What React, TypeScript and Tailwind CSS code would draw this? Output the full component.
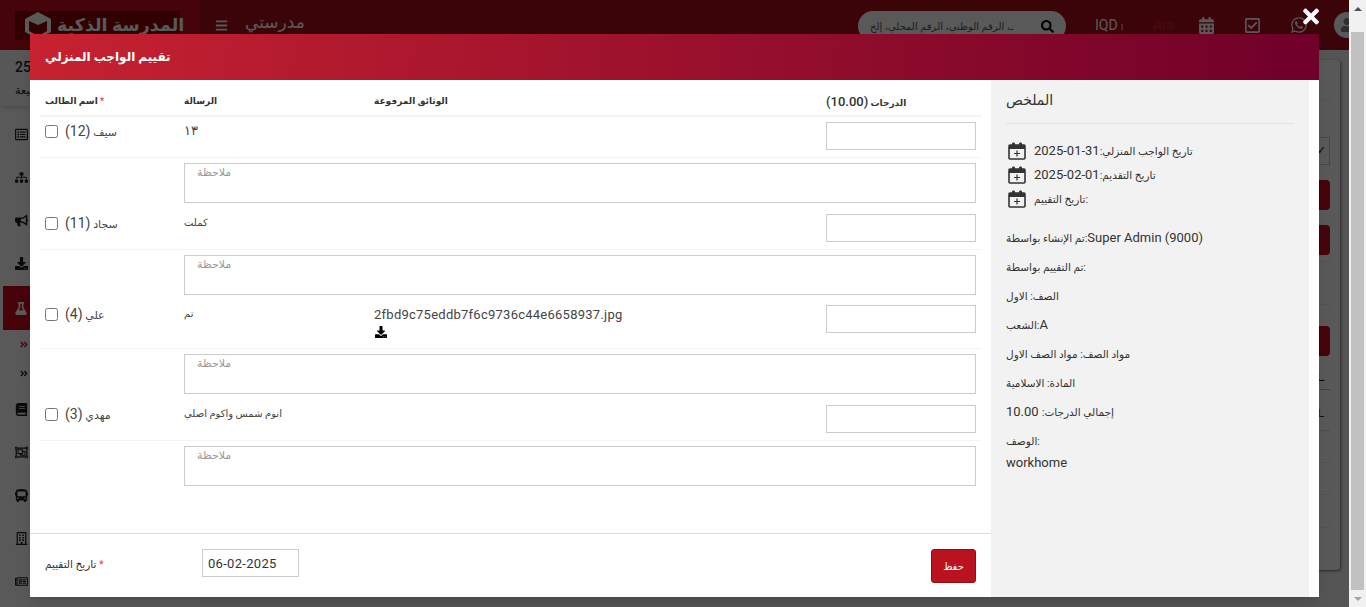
import { FaAngleDoubleRight, FaBook, FaBullhorn, FaBus, FaCalendarAlt, FaDownload, FaFlask, FaRegBuilding, FaRegCheckSquare, FaRegListAlt, FaRegNewspaper, FaRegObjectGroup, FaSearch, FaSitemap, FaTimes, FaUser, FaWhatsapp, FaBars } from 'react-icons/fa';

const font = "font-['Roboto','DejaVu_Sans',sans-serif]";

const students = [
    { name: 'سيف', id: 12, msg: '١٣', msgSize: 'text-[13px]', rowH: 'h-[41px]', noteH: 'h-[51px]' },
    { name: 'سجاد', id: 11, msg: 'كملت', msgSize: 'text-[10px]', rowH: 'h-[41px]', noteH: 'h-[50px]' },
    { name: 'علي', id: 4, msg: 'تم', msgSize: 'text-[10px]', file: '2fbd9c75eddb7f6c9736c44e6658937.jpg', rowH: 'h-[49px]', noteH: 'h-[51px]' },
    { name: 'مهدي', id: 3, msg: 'انوم شمس واكوم اصلي', msgSize: 'text-[10px]', rowH: 'h-[41px]', noteH: 'h-[51px]' },
];

const dateRows = [
    { label: 'تاريخ الواجب المنزلي:', value: '31-01-2025' },
    { label: 'تاريخ التقديم:', value: '01-02-2025' },
    { label: 'تاريخ التقييم:' },
];

const summaryRows = [
    { label: 'تم الإنشاء بواسطة:', value: 'Super Admin (9000)' },
    { label: 'تم التقييم بواسطة:' },
    { label: 'الصف: الاول' },
    { label: 'الشعب:', value: 'A' },
    { label: 'مواد الصف: مواد الصف الاول' },
    { label: 'المادة: الاسلامية' },
    { label: 'إجمالي الدرجات:', value: ' 10.00' },
];

const navTop = [FaRegListAlt, FaSitemap, FaBullhorn, FaDownload];
const navBottom = [FaBook, FaRegObjectGroup, FaBus, FaRegBuilding, FaRegNewspaper];

function CalendarPlus() {
    return (
        <svg width="18" height="18" viewBox="0 0 18 18" className="shrink-0 text-[#333]">
            <rect x="1" y="3" width="16" height="14" rx="1" fill="none" stroke="currentColor" strokeWidth="1.6" />
            <rect x="1" y="3" width="16" height="4" fill="currentColor" />
            <rect x="4" y="0.5" width="3" height="4.5" rx="1.2" fill="currentColor" />
            <rect x="11" y="0.5" width="3" height="4.5" rx="1.2" fill="currentColor" />
            <path d="M9 8.5v6M6 11.5h6" stroke="currentColor" strokeWidth="1.2" />
        </svg>
    );
}

function Header() {
    return (
        <header className="h-[50px] flex items-center bg-[#a60e1c] text-white shrink-0">
            <div className="w-[200px] shrink-0 h-full bg-[#c5091d] flex items-center pl-[15px]">
                <div className="w-[165px] h-[29px] bg-[#8c0000] flex items-center gap-[5px] pl-[9px]">
                    <svg width="28" height="28" viewBox="0 0 28 28" className="text-white shrink-0">
                        <path d="M14 1L27 8v13l-13 7L1 21V8z" fill="currentColor" />
                        <path d="M5 10l9 4 9-4v10l-9 5-9-5z" fill="#8c0000" />
                    </svg>
                    <span dir="rtl" className="text-[17.5px] font-bold tracking-wide whitespace-nowrap">المدرسة الذكية</span>
                </div>
            </div>
            <FaBars className="ml-[15px] w-[13px] h-[13px] shrink-0" />
            <span dir="rtl" className="ml-[17px] w-[60px] shrink-0 text-left text-[17px] -mt-[4px] whitespace-nowrap">مدرستي</span>
            <div className="ml-[553px] mt-[2px] w-[208px] h-[30px] shrink-0 rounded-full bg-white flex items-center justify-between px-[12px] text-[#333] overflow-hidden">
                <span dir="rtl" className="text-[10px] whitespace-nowrap text-[#555]">ـ، الرقم الوطني، الرقم المحلي، إلخ</span>
                <FaSearch className="w-[13px] h-[13px] text-black shrink-0" />
            </div>
            <span className="ml-[29px] text-[14px] w-[58px] shrink-0">IQD ၊</span>
            <span className="text-[14px] text-[#d01a2c] w-[46px] shrink-0">Ara</span>
            <FaCalendarAlt className="w-[15px] h-[17px] mr-[30px] shrink-0" />
            <FaRegCheckSquare className="w-[17px] h-[17px] mr-[29px] shrink-0" />
            <FaWhatsapp className="w-[18px] h-[18px] mr-[26px] shrink-0" />
            <div className="w-[26px] h-[26px] rounded-full bg-white flex items-center justify-center shrink-0">
                <FaUser className="w-[14px] h-[14px] text-[#888]" />
            </div>
        </header>
    );
}

function Sidebar() {
    return (
        <aside className="w-[200px] shrink-0 bg-white text-[#222] flex flex-col">
            <div className="h-[56px] bg-[#fafafa] pl-[15px] pt-[9px] shadow-md">
                <p className="text-[14px] font-medium leading-[17px]">25</p>
                <p className="mt-[8px] text-[11px] leading-[14px]">ربيعة</p>
            </div>
            <nav className="pt-[7px]">
                {navTop.map((Icon, i) => (
                    <div key={i} className="h-[43px] pl-[15px] flex items-center"><Icon className="w-[13px] h-[13px]" /></div>
                ))}
                <div className="ml-[3px] h-[44px] mt-px pl-[12px] bg-[#cc0a1c] text-white flex items-center"><FaFlask className="w-[12px] h-[13px]" /></div>
                <div className="h-[29px] pl-[20px] flex items-center text-[#b5121f]"><FaAngleDoubleRight className="w-[8px] h-[9px]" /></div>
                <div className="h-[29px] pl-[20px] flex items-center"><FaAngleDoubleRight className="w-[8px] h-[9px]" /></div>
                {navBottom.map((Icon, i) => (
                    <div key={i} className="h-[43px] pl-[15px] flex items-center"><Icon className="w-[13px] h-[13px]" /></div>
                ))}
            </nav>
        </aside>
    );
}

function BackgroundCard() {
    return (
        <main className="flex-1 pt-[10px] pr-[9px] pl-[20px] min-w-0">
            <div className="h-[510px] rounded-[4px] bg-white shadow-[1px_1px_3px_rgba(0,0,0,0.5)] flex flex-col items-end pr-[10px]">
                <div className="h-[41px] w-full border-b border-[#eee] shrink-0" />
                <div className="mt-[36px] w-[120px] h-[28px] border border-[#ccc] flex items-center justify-end pr-[3px] text-[11px] shrink-0">✓</div>
                <div className="mt-[15px] w-[120px] h-[30px] rounded-[4px] bg-[#c8101e] shrink-0" />
                <div className="mt-[15px] w-[120px] h-[30px] rounded-[4px] bg-[#c8101e] shrink-0" />
                <div className="mt-[6px] w-full border-b border-[#eee] shrink-0" />
                <div className="mt-[42px] w-full border-b border-[#eee] shrink-0" />
                <div className="mt-[21px] w-[120px] h-[30px] rounded-[4px] bg-[#c8101e] shrink-0" />
                <div className="mt-[14px] w-full h-[20px] border-b border-[#bbb] text-right text-[12px] leading-[14px] text-[#123] shrink-0 pr-[6px]">ـا</div>
                <div className="w-full h-[41px] border-b border-[#ddd] text-right text-[11px] text-[#246] pt-[16px] pr-[6px] shrink-0">ـا</div>
                <div className="mt-[31px] w-full border-b border-[#eee] shrink-0" />
                <div className="mt-[31px] w-full border-b border-[#eee] shrink-0" />
                <div className="mt-[32px] w-full border-b border-[#eee] shrink-0" />
            </div>
        </main>
    );
}

function EvaluationTable() {
    return (
        <div className="mx-[10px] text-[#444]">
            <div className="grid grid-cols-[139px_190px_452px_160px] h-[37px] pt-[8px] border-b-2 border-[#f4f4f4] font-bold text-[9px] items-center text-[#333]">
                <div className="pl-[5px]">اسم الطالب <span className="text-[#e8344a]">*</span></div>
                <div className="pl-[5px]">الرسالة</div>
                <div className="pl-[5px]">الوثائق المرفوعة</div>
                <div className="pl-[5px]"><span dir="rtl" className="inline-block">الدرجات <span className="text-[13px] font-medium">(10.00)</span></span></div>
            </div>
            {students.map(s => (
                <div key={s.id}>
                    <div className={`grid grid-cols-[139px_190px_452px_160px] border-b border-[#f4f4f4] pt-[5px] ${s.rowH}`}>
                        <div className="pl-[5px] flex items-start gap-[7px]">
                            <input type="checkbox" className="mt-[3px] w-[13px] h-[13px] m-0" />
                            <span dir="rtl" className="text-[11px] leading-[18px]">{s.name} <span className="text-[14px]">({s.id})</span></span>
                        </div>
                        <div className={`pl-[5px] leading-[18px] ${s.msgSize}`}>{s.msg}</div>
                        <div className="pl-[5px] pt-px text-[13px] leading-[18px] tracking-[0.25px]">
                            {s.file}
                            {s.file && <FaDownload className="w-[12px] h-[12px] mt-[2px] ml-px text-black" />}
                        </div>
                        <div className="px-[5px]"><input className="w-full h-[28px] border border-[#ccc] bg-white" /></div>
                    </div>
                    <div className={`grid grid-cols-[139px_1fr] border-b border-[#f4f4f4] pt-[5px] last:border-0 ${s.noteH}`}>
                        <div />
                        <div className="pl-[5px] pr-[5px]">
                            <textarea rows={2} placeholder="ملاحظة" className="block w-full h-[40px] resize-none border border-[#ccc] bg-white pl-[12px] pt-[2px] text-[11px] leading-[14px] placeholder:text-[#999]" />
                        </div>
                    </div>
                </div>
            ))}
        </div>
    );
}

function Summary() {
    return (
        <aside className="w-[318px] shrink-0 bg-[#f2f2f2] px-[15px] text-[#333]">
            <h3 dir="rtl" className="h-[44px] border-b border-[#e1e1e1] text-left text-[14px] leading-[40px]">الملخص</h3>
            <div className="mt-[18px] flex flex-col gap-[6px] pl-[2px]">
                {dateRows.map(d => (
                    <div key={d.label} className="h-[18px] flex items-center gap-[8px]">
                        <CalendarPlus />
                        <span className="text-[10.5px] leading-[18px]">{d.label}<span className="text-[13px]">{d.value}</span></span>
                    </div>
                ))}
            </div>
            <div className="mt-[21px]">
                {summaryRows.map(r => (
                    <div key={r.label} className="h-[29px] leading-[18px] text-[10.5px] whitespace-pre">
                        {r.label}<span className="text-[13px]">{r.value}</span>
                    </div>
                ))}
                <div className="mt-px text-[10.5px] leading-[18px]">الوصف:</div>
                <div className="mt-[3px] text-[13px] leading-[18px]">workhome</div>
            </div>
        </aside>
    );
}

function Modal() {
    return (
        <div className="absolute left-[30px] top-[34px] w-[1289px] h-[563px] bg-white flex flex-col shadow-lg">
            <div className="h-[46px] shrink-0 bg-[linear-gradient(95deg,#c72230,#6f0029)] flex items-center pl-[15px] text-white">
                <h2 className="text-[12px] font-bold">تقييم الواجب المنزلي</h2>
            </div>
            <div className="flex-1 flex pr-[10px] min-h-0">
                <div className="flex-1 flex flex-col min-w-0">
                    <div className="h-[454px] shrink-0 overflow-hidden border-b border-[#ddd]">
                        <EvaluationTable />
                    </div>
                    <div className="flex items-start justify-between pt-[15px] pl-[15px] pr-[15px]">
                        <div className="flex items-center h-[28px] text-[#333]">
                            <span className="w-[157px] pt-[3px] text-[10.5px]">تاريخ التقييم <span className="text-[#e8344a]">*</span></span>
                            <input defaultValue="06-02-2025" className="w-[97px] h-[28px] border border-[#ccc] px-[5px] text-[13px] tracking-[0.3px]" />
                        </div>
                        <button className="w-[45px] h-[34px] rounded-[3px] border border-[#8e0f19] bg-[#bb1220] text-white text-[10px]">حفظ</button>
                    </div>
                </div>
                <Summary />
            </div>
        </div>
    );
}

function Scrollbar() {
    return (
        <div className="w-[17px] h-full shrink-0 bg-[#f1f1f1] flex flex-col items-center">
            <div className="h-[32px] flex items-center justify-center pb-[14px]">
                <div className="w-0 h-0 border-x-[4px] border-x-transparent border-b-[4px] border-b-[#505050]" />
            </div>
            <div className="w-[13px] h-[558px] bg-[#c1c1c1]" />
            <div className="flex-1 flex items-center justify-center">
                <div className="w-0 h-0 border-x-[4px] border-x-transparent border-t-[4px] border-t-[#a3a3a3]" />
            </div>
        </div>
    );
}

export default function App() {
    return (
        <div className={`w-[1366px] h-[607px] flex overflow-hidden ${font}`}>
            <div className="relative flex-1 min-w-0 h-full bg-[#f2f2f2] flex flex-col overflow-hidden">
                <Header />
                <div className="flex flex-1 min-h-0">
                    <Sidebar />
                    <BackgroundCard />
                </div>
                <div className="absolute inset-0 bg-black/65" />
                <Modal />
                <FaTimes className="absolute left-[1303px] top-[5px] w-[16px] h-[23px] text-white" />
            </div>
            <Scrollbar />
        </div>
    );
}
